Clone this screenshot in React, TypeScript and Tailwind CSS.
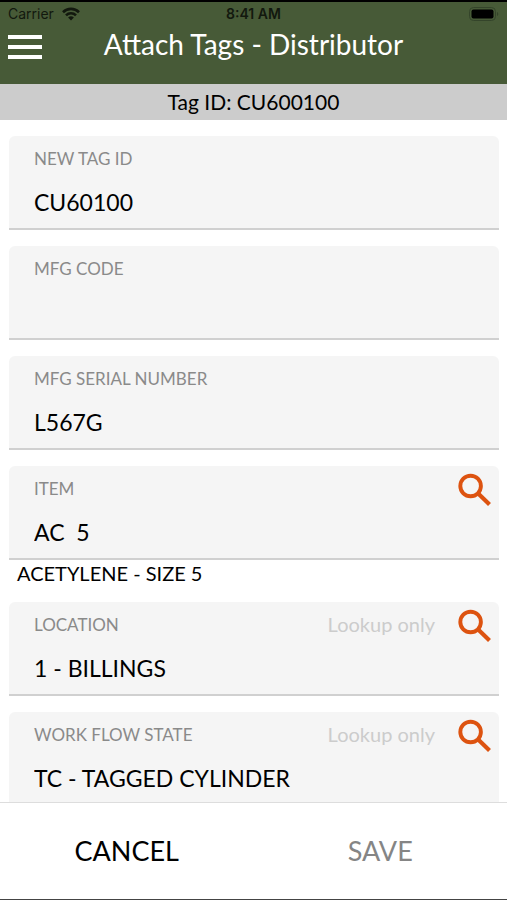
import { useId, useState } from "react";

interface FieldProps {
  label: string;
  defaultValue?: string;
  search?: boolean;
  lookupOnly?: boolean;
}

function SearchIcon() {
  return (
    <svg viewBox="0 0 44 44" className="size-11" fill="none" stroke="currentColor" strokeWidth="3.9">
      <circle cx="17.6" cy="18" r="10.3" />
      <path d="M24.9 25.3l11.6 11.2" strokeWidth="4.2" />
    </svg>
  );
}

function Field({ label, defaultValue = "", search, lookupOnly }: FieldProps) {
  const id = useId();
  const [value, setValue] = useState(defaultValue);

  return (
    <div className="relative shrink-0 rounded-t-md border-b-2 border-[#d0d0d0] bg-[#f5f5f5] px-[25px] py-[11px]">
      <label htmlFor={id} className="block text-[17px] leading-6 text-[#8a8a8a]">
        {label}
      </label>
      <input
        id={id}
        type="text"
        value={value}
        readOnly={lookupOnly}
        onChange={(e) => setValue(e.target.value)}
        className="mt-4 block h-[30px] w-full bg-transparent text-[23px] text-black outline-none"
      />
      {search && (
        <div className="absolute top-0.5 right-0.5 flex items-center gap-[18px]">
          {lookupOnly && <span className="pb-1 text-xl leading-6 text-[#cccccc]">Lookup only</span>}
          <button type="button" aria-label={`Search ${label}`} className="text-[#dd5310]">
            <SearchIcon />
          </button>
        </div>
      )}
    </div>
  );
}

function StatusBar() {
  return (
    <div className="grid grid-cols-3 items-center border-t-2 border-black px-2 font-['Inter',sans-serif] text-sm leading-6 text-[#12180e]">
      <div className="flex items-center gap-2">
        <span>Carrier</span>
        <svg viewBox="0 0 18 14" className="h-[14px] w-[18px]" fill="none" stroke="currentColor" strokeWidth="2.6">
          <path d="M1 5.2a11.4 11.4 0 0 1 16 0" />
          <path d="M4 8.4a7 7 0 0 1 10 0" />
          <path d="M9 13.6 6.1 10.6a4.1 4.1 0 0 1 5.8 0Z" fill="currentColor" stroke="none" />
        </svg>
      </div>
      <span className="text-center font-semibold">8:41 AM</span>
      <svg viewBox="0 0 30 14" className="h-[14px] w-[30px] justify-self-end">
        <rect x="0.5" y="0.5" width="26" height="13" rx="4" fill="none" stroke="#34442a" />
        <rect x="2.5" y="2.5" width="22" height="9" rx="2" fill="#000" />
        <path d="M28 5v4a2.2 2.2 0 0 0 0-4Z" fill="#34442a" />
      </svg>
    </div>
  );
}

export default function App() {
  return (
    <div className="flex h-screen flex-col border-b border-[#444444] bg-white font-['Lato',sans-serif] text-black">
      <header className="shrink-0 bg-[#475a37]">
        <StatusBar />
        <div className="relative flex h-[58px] justify-center">
          <button type="button" aria-label="Menu" className="absolute top-[9px] left-2 flex w-[34px] flex-col gap-[6px]">
            <span className="h-1 bg-white" />
            <span className="h-1 bg-white" />
            <span className="h-1 bg-white" />
          </button>
          <h1 className="text-[28px] leading-9 text-white">Attach Tags - Distributor</h1>
        </div>
      </header>
      <div className="shrink-0 bg-[#cccccc] text-center text-[21px] leading-9">Tag ID: CU600100</div>

      <main className="flex min-h-0 flex-1 flex-col gap-4 overflow-hidden pt-4 pr-2 pl-[9px]">
        <Field label="NEW TAG ID" defaultValue="CU60100" />
        <Field label="MFG CODE" />
        <Field label="MFG SERIAL NUMBER" defaultValue="L567G" />
        <div className="shrink-0">
          <Field label="ITEM" defaultValue="AC  5" search />
          <p className="px-2 text-xl leading-[26px]">ACETYLENE - SIZE 5</p>
        </div>
        <Field label="LOCATION" defaultValue="1 - BILLINGS" search lookupOnly />
        <Field label="WORK FLOW STATE" defaultValue="TC - TAGGED CYLINDER" search lookupOnly />
      </main>

      <footer className="grid h-[97px] shrink-0 grid-cols-2 border-t border-[#dddddd] bg-white text-[27px]">
        <button type="button">CANCEL</button>
        <button type="button" disabled className="text-[#858585]">
          SAVE
        </button>
      </footer>
    </div>
  );
}
